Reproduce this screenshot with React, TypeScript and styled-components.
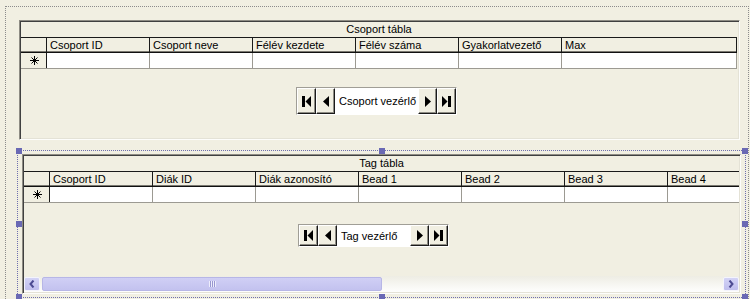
import React from "react";
import styled, { createGlobalStyle } from "styled-components";

const GlobalStyle = createGlobalStyle`
  html, body { margin: 0; padding: 0; background: #f1efe2; }
  body {
    font-family: "Liberation Sans", Arial, sans-serif;
    font-size: 11px;
    color: #000;
    overflow: hidden;
  }
`;

const BG = "#f1efe2";

const Page = styled.div`
  width: 750px;
  height: 299px;
  overflow: hidden;
  background: ${BG};
  padding: 6px 1px 0 5px;
  box-sizing: border-box;
`;

const OuterFrame = styled.div`
  border: 1px dotted #8c8c8c;
  border-bottom: none;
  height: 320px;
  display: flex;
  flex-direction: column;
  align-items: flex-start;
`;

const SubForm = styled.div<{ $w: number; $h: number }>`
  width: ${(p) => p.$w}px;
  height: ${(p) => p.$h}px;
  box-sizing: border-box;
  border-style: solid;
  border-width: 1px;
  border-color: #8e8c84 #fdfdfb #fdfdfb #8e8c84;
  box-shadow: inset 1px 1px 0 #404040, inset -1px -1px 0 #e4e2d6;
  padding: 1px;
  display: flex;
  flex-direction: column;
  overflow: hidden;
  background: ${BG};
`;

const TopSub = styled(SubForm)`
  margin: 13px 0 0 13px;
`;

const SelectionFrame = styled.div`
  position: relative;
  margin: 10px 0 0 11px;
  width: 729px;
  height: 148px;
  box-sizing: border-box;
  border: 1px dotted #6f6fae;
  padding: 3px 4px 3px 4px;
`;

const Handle = styled.div<{ $x: "l" | "c" | "r"; $y: "t" | "m" | "b" }>`
  position: absolute;
  width: 6px;
  height: 6px;
  background: #6a69b4;
  ${(p) =>
    p.$x === "l" ? "left: -2px;" : p.$x === "r" ? "right: -3px;" : "left: calc(50% - 3px);"}
  ${(p) =>
    p.$y === "t" ? "top: -3px;" : p.$y === "b" ? "bottom: -3px;" : "top: calc(50% - 3px);"}
`;

const Table = styled.div<{ $w: number }>`
  width: ${(p) => p.$w}px;
  flex: none;
  overflow: hidden;
  display: flex;
  flex-direction: column;
`;

const TitleRow = styled.div`
  height: 15px;
  line-height: 15px;
  text-align: center;
  border-bottom: 1px solid #1a1a1a;
  white-space: nowrap;
`;

const HeaderRow = styled.div`
  display: flex;
  height: 14px;
  border-bottom: 1px solid #111;
  box-shadow: inset 0 -1px 0 #7a7870;
`;

const HeaderCell = styled.div<{ $w?: number }>`
  ${(p) => (p.$w ? `width: ${p.$w}px; flex: none;` : "flex: 1;")}
  box-sizing: border-box;
  border-right: 1px solid #1a1a1a;
  padding-left: 3px;
  line-height: 14px;
  white-space: nowrap;
  overflow: hidden;
`;

const DataRow = styled.div`
  display: flex;
  height: 15px;
  border-bottom: 1px solid #9c9a92;
  background: #fff;
`;

const Selector = styled.div`
  width: 26px;
  flex: none;
  box-sizing: border-box;
  border-right: 1px solid #1a1a1a;
  background: ${BG};
  display: flex;
  align-items: center;
  justify-content: center;
  padding-left: 1px;
`;

const DataCell = styled.div<{ $w?: number }>`
  ${(p) => (p.$w ? `width: ${p.$w}px; flex: none;` : "flex: 1;")}
  box-sizing: border-box;
  border-right: 1px solid #9c9a92;
  background: #fff;
`;

const NavArea = styled.div<{ $top: number; $left: number }>`
  display: flex;
  margin: ${(p) => p.$top}px 0 0 ${(p) => p.$left}px;
`;

const Nav = styled.div<{ $h: number }>`
  display: flex;
  height: ${(p) => p.$h}px;
  border-style: solid;
  border-width: 1px;
  border-color: #a09e96 #fff #fff #a09e96;
`;

const NavButton = styled.div`
  width: 19px;
  box-sizing: border-box;
  background: ${BG};
  border-style: solid;
  border-width: 1px;
  border-color: #fff #1a1a1a #1a1a1a #fff;
  box-shadow: inset -1px -1px 0 #8e8c84;
  display: flex;
  align-items: center;
  justify-content: center;
`;

const NavLabel = styled.div<{ $w: number }>`
  width: ${(p) => p.$w}px;
  background: #fff;
  display: flex;
  align-items: center;
  padding-left: 4px;
  box-sizing: border-box;
  white-space: nowrap;
`;

const Spacer = styled.div`
  flex: 1;
`;

const ScrollBar = styled.div`
  display: flex;
  height: 16px;
  flex: none;
  box-sizing: border-box;
  padding: 1px 0;
  background: linear-gradient(#eeede4, #fefefd);
`;

const ScrollButton = styled.div`
  width: 16px;
  box-sizing: border-box;
  border-radius: 2px;
  border: 1px solid #f4f4fc;
  background: linear-gradient(#d3d3f6, #bfbeed);
  display: flex;
  align-items: center;
  justify-content: center;
`;

const Thumb = styled.div<{ $w: number }>`
  width: ${(p) => p.$w}px;
  margin-left: 2px;
  box-sizing: border-box;
  border-radius: 2px;
  border: 1px solid #b7b6e6;
  background: linear-gradient(#d0cff5, #c3c2ef);
  display: flex;
  align-items: center;
  justify-content: center;
`;

const Grip = styled.div`
  width: 7px;
  height: 6px;
  background: repeating-linear-gradient(
    90deg,
    #eeeefc 0px,
    #eeeefc 1px,
    #9897d0 1px,
    #9897d0 2px
  );
`;

const Star = () => (
  <svg width="9" height="9" viewBox="0 0 9 9">
    <g stroke="#000" strokeWidth="1" shapeRendering="crispEdges">
      <line x1="4.5" y1="0" x2="4.5" y2="9" />
      <line x1="0" y1="4.5" x2="9" y2="4.5" />
    </g>
    <g stroke="#000" strokeWidth="1">
      <line x1="1.5" y1="1.5" x2="7.5" y2="7.5" />
      <line x1="7.5" y1="1.5" x2="1.5" y2="7.5" />
    </g>
  </svg>
);

type IconKind = "first" | "prev" | "next" | "last";

const NavIcon = ({ kind }: { kind: IconKind }) => {
  const flip = kind === "next" || kind === "last";
  const bar = kind === "first" || kind === "last";
  return (
    <svg
      width={bar ? 9 : 6}
      height="11"
      viewBox={bar ? "0 0 9 11" : "0 0 6 11"}
      style={flip ? { transform: "scaleX(-1)" } : undefined}
    >
      {bar ? (
        <>
          <rect x="0" y="0" width="3" height="11" fill="#000" />
          <polygon points="9,0 3.5,5.5 9,11" fill="#000" />
        </>
      ) : (
        <polygon points="6,0 0,5.5 6,11" fill="#000" />
      )}
    </svg>
  );
};

const Chevron = ({ dir }: { dir: "l" | "r" }) => (
  <svg width="6" height="8" viewBox="0 0 6 8">
    <polyline
      points={dir === "l" ? "4.5,0.5 1.5,4 4.5,7.5" : "1.5,0.5 4.5,4 1.5,7.5"}
      fill="none"
      stroke="#4c4b92"
      strokeWidth="2"
    />
  </svg>
);

const Navigator = ({
  label,
  labelWidth,
  height,
}: {
  label: string;
  labelWidth: number;
  height: number;
}) => (
  <Nav $h={height}>
    <NavButton>
      <NavIcon kind="first" />
    </NavButton>
    <NavButton>
      <NavIcon kind="prev" />
    </NavButton>
    <NavLabel $w={labelWidth}>{label}</NavLabel>
    <NavButton>
      <NavIcon kind="next" />
    </NavButton>
    <NavButton>
      <NavIcon kind="last" />
    </NavButton>
  </Nav>
);

const topColumns = [
  "Csoport ID",
  "Csoport neve",
  "Félév kezdete",
  "Félév száma",
  "Gyakorlatvezető",
];

const bottomColumns = [
  "Csoport ID",
  "Diák ID",
  "Diák azonosító",
  "Bead 1",
  "Bead 2",
  "Bead 3",
  "Bead 4",
];

export default function App() {
  return (
    <>
      <GlobalStyle />
      <Page>
        <OuterFrame>
          <TopSub $w={721} $h={120}>
            <Table $w={716}>
              <TitleRow>Csoport tábla</TitleRow>
              <HeaderRow>
                <HeaderCell $w={26} />
                {topColumns.map((c) => (
                  <HeaderCell key={c} $w={103}>
                    {c}
                  </HeaderCell>
                ))}
                <HeaderCell>Max</HeaderCell>
              </HeaderRow>
              <DataRow>
                <Selector>
                  <Star />
                </Selector>
                {topColumns.map((c) => (
                  <DataCell key={c} $w={103} />
                ))}
                <DataCell />
              </DataRow>
            </Table>
            <NavArea $top={18} $left={275}>
              <Navigator label="Csoport vezérlő" labelWidth={83} height={26} />
            </NavArea>
          </TopSub>

          <SelectionFrame>
            <Handle $x="l" $y="t" />
            <Handle $x="c" $y="t" />
            <Handle $x="r" $y="t" />
            <Handle $x="l" $y="m" />
            <Handle $x="r" $y="m" />
            <Handle $x="l" $y="b" />
            <Handle $x="c" $y="b" />
            <Handle $x="r" $y="b" />
            <SubForm $w={719} $h={140}>
              <Table $w={715}>
                <TitleRow>Tag tábla</TitleRow>
                <HeaderRow>
                  <HeaderCell $w={26} />
                  {bottomColumns.map((c) => (
                    <HeaderCell key={c} $w={103}>
                      {c}
                    </HeaderCell>
                  ))}
                </HeaderRow>
                <DataRow>
                  <Selector>
                    <Star />
                  </Selector>
                  {bottomColumns.map((c) => (
                    <DataCell key={c} $w={103} />
                  ))}
                </DataRow>
              </Table>
              <NavArea $top={21} $left={274}>
                <Navigator label="Tag vezérlő" labelWidth={73} height={21} />
              </NavArea>
              <Spacer />
              <ScrollBar>
                <ScrollButton>
                  <Chevron dir="l" />
                </ScrollButton>
                <Thumb $w={340}>
                  <Grip />
                </Thumb>
                <Spacer />
                <ScrollButton>
                  <Chevron dir="r" />
                </ScrollButton>
              </ScrollBar>
            </SubForm>
          </SelectionFrame>
        </OuterFrame>
      </Page>
    </>
  );
}
